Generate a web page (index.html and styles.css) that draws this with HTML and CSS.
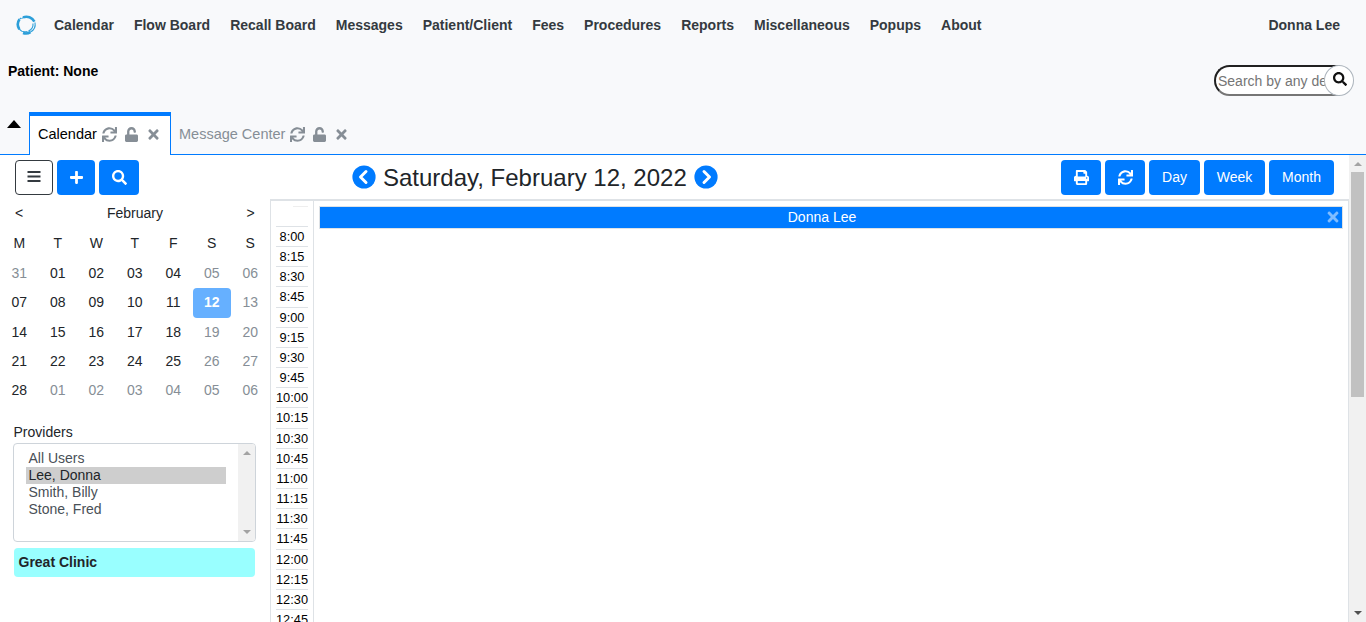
FILE: index.html
```html
<!DOCTYPE html>
<html lang="en">
<head>
<meta charset="utf-8">
<title>Calendar</title>
<link rel="stylesheet" href="styles.css">
</head>
<body>
<svg class="defs" width="0" height="0">
<symbol id="sync" viewBox="0 0 512 512"><path d="M440.65 12.57l4 82.77A247.16 247.16 0 0 0 255.83 8C134.73 8 33.91 94.92 12.29 209.82A12 12 0 0 0 24.09 224h49.05a12 12 0 0 0 11.67-9.26 175.91 175.91 0 0 1 317-56.94l-101.46-4.86a12 12 0 0 0-12.57 12v47.41a12 12 0 0 0 12 12H500a12 12 0 0 0 12-12V12a12 12 0 0 0-12-12h-47.37a12 12 0 0 0-11.98 12.57zM255.83 432a175.61 175.61 0 0 1-146-77.8l101.8 4.87a12 12 0 0 0 12.57-12v-47.4a12 12 0 0 0-12-12H12a12 12 0 0 0-12 12V500a12 12 0 0 0 12 12h47.35a12 12 0 0 0 12-12.6l-4.15-82.57A247.17 247.17 0 0 0 255.83 504c121.11 0 221.93-86.92 243.55-201.82a12 12 0 0 0-11.8-14.18h-49.05a12 12 0 0 0-11.67 9.26A175.86 175.86 0 0 1 255.83 432z"/></symbol>
<symbol id="search" viewBox="0 0 512 512"><path d="M505 442.7L405.3 343c-4.5-4.5-10.6-7-17-7H372c27.6-35.3 44-79.7 44-128C416 93.1 322.9 0 208 0S0 93.1 0 208s93.1 208 208 208c48.3 0 92.7-16.4 128-44v16.3c0 6.4 2.5 12.5 7 17l99.7 99.7c9.4 9.4 24.6 9.4 33.9 0l28.3-28.3c9.4-9.4 9.4-24.6.1-34zM208 336c-70.7 0-128-57.2-128-128 0-70.7 57.2-128 128-128 70.7 0 128 57.2 128 128 0 70.7-57.2 128-128 128z"/></symbol>
<symbol id="times" viewBox="0 0 352 512"><path d="M242.72 256l100.07-100.07c12.28-12.28 12.28-32.19 0-44.48l-22.24-22.24c-12.28-12.28-32.19-12.28-44.48 0L176 189.28 75.93 89.21c-12.28-12.28-32.19-12.28-44.48 0L9.21 111.45c-12.28 12.28-12.28 32.19 0 44.48L109.28 256 9.21 356.07c-12.28 12.28-12.28 32.19 0 44.48l22.24 22.24c12.28 12.28 32.2 12.28 44.48 0L176 322.72l100.07 100.07c12.28 12.28 32.2 12.28 44.48 0l22.24-22.24c12.28-12.28 12.28-32.19 0-44.48L242.72 256z"/></symbol>
<symbol id="plus" viewBox="0 0 448 512"><path d="M416 208H272V64c0-17.67-14.33-32-32-32h-32c-17.67 0-32 14.33-32 32v144H32c-17.67 0-32 14.33-32 32v32c0 17.67 14.33 32 32 32h144v144c0 17.67 14.33 32 32 32h32c17.67 0 32-14.33 32-32V304h144c17.67 0 32-14.33 32-32v-32c0-17.67-14.33-32-32-32z"/></symbol>
<symbol id="unlock" viewBox="0 0 448 512"><path d="M400 256H152V152.9c0-39.6 31.7-72.5 71.3-72.9 40-.4 72.7 32.1 72.7 72v16c0 13.3 10.7 24 24 24h32c13.3 0 24-10.7 24-24v-16C376 68 307.5-.3 223.5 0 139.5.3 72 69.5 72 153.5V256H48c-26.5 0-48 21.5-48 48v160c0 26.5 21.5 48 48 48h352c26.5 0 48-21.5 48-48V304c0-26.5-21.5-48-48-48z"/></symbol>
<symbol id="print" viewBox="0 0 512 512"><path fill-rule="evenodd" d="M448 192V77.25c0-8.49-3.37-16.62-9.37-22.63L393.37 9.37c-6-6-14.14-9.37-22.63-9.37H96C78.33 0 64 14.33 64 32v160c-35.35 0-64 28.65-64 64v112c0 8.84 7.16 16 16 16h48v96c0 17.67 14.33 32 32 32h320c17.67 0 32-14.33 32-32v-96h48c8.84 0 16-7.16 16-16V256c0-35.35-28.65-64-64-64zm-64 256H128v-76h256v76zm0-224H128V64h192v48c0 8.84 7.16 16 16 16h48v96zm48 72a24 24 0 1 1 0-48 24 24 0 0 1 0 48z"/></symbol>
</svg>

<header class="top">
  <nav class="menu">
    <svg class="logo" viewBox="0 0 22 22"><g fill="none" stroke="#2c9fd9"><path stroke-width="2.6" d="M8 3.4A9 9 0 0 1 19.4 7.6M4.5 5.2a9 9 0 0 0-.2 10M8 19a8.6 8.6 0 0 0 7.5-.8"/><path stroke-width="1.1" d="M6.5 4.6A9 9 0 0 1 9 3.2M4.6 5.2 6 4M20 8.500a9 9 0 0 1-4.600 9.600M3.800 14.500a8 8 0 0 0 8.600 3M18 9.500a7.500 7.500 0 0 1-4.500 7.600"/></g></svg>
    <span>Calendar</span><span>Flow Board</span><span>Recall Board</span><span>Messages</span><span>Patient/Client</span><span>Fees</span><span>Procedures</span><span>Reports</span><span>Miscellaneous</span><span>Popups</span><span>About</span>
    <span class="user">Donna Lee</span>
  </nav>
  <div class="patient">
    <span class="patient-name">Patient: None</span>
    <div class="search"><div class="search-field">Search by any demographics</div><div class="search-btn"><svg><use href="#search"/></svg></div></div>
  </div>
  <div class="tabs">
    <div class="toggle"></div>
    <div class="tab active"><span>Calendar</span><svg class="i-sync"><use href="#sync"/></svg><svg class="i-lock"><use href="#unlock"/></svg><svg class="i-x"><use href="#times"/></svg></div>
    <div class="tab"><span>Message Center</span><svg class="i-sync"><use href="#sync"/></svg><svg class="i-lock"><use href="#unlock"/></svg><svg class="i-x"><use href="#times"/></svg></div>
  </div>
</header>

<main class="frame">
  <div class="content">
    <div class="toolbar">
      <div class="left-tools">
        <div class="btn outline"><svg viewBox="0 0 14 14"><path d="M.5 1h13v2H.5zM.5 5.500h13v2H.5zM.5 10h13v2H.5z"/></svg></div>
        <div class="btn w38"><svg class="p"><use href="#plus"/></svg></div>
        <div class="btn w40"><svg><use href="#search"/></svg></div>
      </div>
      <div class="date">
        <svg viewBox="0 0 24 24"><circle cx="12" cy="12" r="11.6"/><path d="M14 6.500 8.500 12l5.500 5.500"/></svg>
        <span>Saturday, February 12, 2022</span>
        <svg viewBox="0 0 24 24"><circle cx="12" cy="12" r="11.6"/><path d="M10 6.500l5.500 5.500-5.500 5.500"/></svg>
      </div>
      <div class="right-tools">
        <div class="btn w40"><svg><use href="#print"/></svg></div>
        <div class="btn w40"><svg><use href="#sync"/></svg></div>
        <div class="btn w51">Day</div><div class="btn w61">Week</div><div class="btn w65">Month</div>
      </div>
    </div>
    <div class="body">
      <aside class="side">
        <div class="month"><span>&lt;</span><span>February</span><span>&gt;</span></div>
        <div class="days head"><span>M</span><span>T</span><span>W</span><span>T</span><span>F</span><span>S</span><span>S</span></div>
        <div class="days">
          <span class="off">31</span><span>01</span><span>02</span><span>03</span><span>04</span><span class="off">05</span><span class="off">06</span>
          <span>07</span><span>08</span><span>09</span><span>10</span><span>11</span><span class="today">12</span><span class="off">13</span>
          <span>14</span><span>15</span><span>16</span><span>17</span><span>18</span><span class="off">19</span><span class="off">20</span>
          <span>21</span><span>22</span><span>23</span><span>24</span><span>25</span><span class="off">26</span><span class="off">27</span>
          <span>28</span><span class="off">01</span><span class="off">02</span><span class="off">03</span><span class="off">04</span><span class="off">05</span><span class="off">06</span>
        </div>
        <div class="label">Providers</div>
        <div class="select">
          <div class="options"><div>All Users</div><div class="sel">Lee, Donna</div><div>Smith, Billy</div><div>Stone, Fred</div></div>
          <div class="mini-bar"><i class="up"></i><i class="down"></i></div>
        </div>
        <div class="clinic">Great Clinic</div>
      </aside>
      <section class="grid">
        <div class="times">
          <div class="notch"></div>
          <div>8:00</div><div>8:15</div><div>8:30</div><div>8:45</div><div>9:00</div><div>9:15</div><div>9:30</div><div>9:45</div><div>10:00</div><div>10:15</div><div>10:30</div><div>10:45</div><div>11:00</div><div>11:15</div><div>11:30</div><div>11:45</div><div>12:00</div><div>12:15</div><div>12:30</div><div>12:45</div>
        </div>
        <div class="schedule"><div class="provider"><span>Donna Lee</span><svg><use href="#times"/></svg></div></div>
      </section>
    </div>
  </div>
  <div class="scroll"><i class="up"></i><div class="thumb"></div><i class="down"></i></div>
</main>
</body>
</html>
```
FILE: styles.css
```css
* { box-sizing: border-box; }
body { margin: 0; height: 622px; overflow: hidden; display: flex; flex-direction: column; background: #fff; color: #212529; font: 14px/20px "Liberation Sans", Arial, sans-serif; }
.defs { display: none; }
svg { fill: currentColor; flex: none; display: block; }
.top { height: 155px; flex: none; background: #f8f9fb; display: flex; flex-direction: column; }
.menu { height: 50px; display: flex; align-items: center; gap: 20px; padding: 0 26px 0 15px; font-weight: bold; color: #343a40; }
.logo { width: 22px; height: 22px; margin-right: -3px; }
.user { margin-left: auto; }
.patient { height: 62px; display: flex; justify-content: space-between; padding: 11px 12px 0 8px; }
.patient-name { font-weight: bold; color: #000; }
.search { display: flex; margin-top: 3px; height: 32px; align-items: center; }
.search-field { width: 126px; height: 31px; border: 2px solid #767676; border-color: #212121 #767676 #767676 #212121; border-right: 0; border-radius: 16px 0 0 16px; background: #fff; color: #757575; line-height: 28px; padding-left: 2px; font-size: 14px; white-space: nowrap; overflow: hidden; }
.search-btn { width: 30px; height: 31px; margin-left: -16px; border: 1px solid #adb5bd; border-radius: 50%; background: #fff; display: grid; place-items: center; color: #111; padding: 0 0 2px 2px; }
.search-btn svg { width: 14px; height: 14px; }
.tabs { height: 43px; display: flex; border-bottom: 1px solid #007bff; }
.toggle { width: 29px; padding: 8px 0 0 7px; }
.toggle::before { content: ""; display: block; width: 0; border: 7px solid transparent; border-top: 0; border-bottom: 8px solid #000; }
.tab { height: 42px; display: flex; align-items: center; padding: 2px 8px 0; color: #868e96; font-size: 14.5px; }
.tab.active { height: 43px; border: 1px solid #007bff; border-top-width: 4px; border-bottom: 0; background: #fff; padding: 0 0 3px 8px; width: 142px; }
.tab.active span { color: #000; }
.tab svg { margin-top: 1px; }
.i-sync { width: 15px; height: 15px; margin-left: 5px; }
.i-lock { width: 13px; height: 15px; margin-left: 8px; }
.i-x { width: 11px; height: 15px; margin-left: 10px; }
.frame { flex: 1; min-height: 0; display: flex; }
.content { flex: 1; min-width: 0; display: flex; flex-direction: column; }
.toolbar { height: 44px; flex: none; display: grid; grid-template-columns: 337px 1fr auto; padding: 5px 15px 0 15px; }
.left-tools, .right-tools { display: flex; gap: 4px; }
.btn { width: 38px; height: 35px; border-radius: 4px; background: #007bff; color: #fff; display: flex; align-items: center; justify-content: center; padding-bottom: 1px; }
.btn svg { width: 15px; height: 15px; }
.btn svg.p { width: 13px; height: 15px; }
.btn.outline { background: #fff; border: 1px solid #343a40; color: #343a40; }
.btn.outline svg { width: 14px; height: 14px; }
.w40 { width: 40px; } .w51 { width: 51px; } .w61 { width: 61px; } .w65 { width: 65px; }
.date { height: 35px; display: flex; align-items: center; gap: 7px; font-size: 24px; padding-bottom: 1px; }
.date svg { width: 24px; height: 24px; }
.date circle { fill: #007bff; }
.date path { fill: none; stroke: #fff; stroke-width: 3; stroke-linecap: round; stroke-linejoin: round; }
.date span { white-space: nowrap; padding-top: 1px; }
.body { flex: 1; min-height: 0; display: flex; }
.side { width: 270px; display: flex; flex-direction: column; }
.month { display: grid; grid-template-columns: 38px 194px 38px; height: 30px; align-items: center; text-align: center; padding-bottom: 2px; }
.month span:last-child { padding-right: 1px; }
.days { display: grid; grid-template-columns: repeat(7, 38.5px); grid-auto-rows: 29.4px; justify-items: center; text-align: center; line-height: 29.4px; color: #212529; }
.head { margin-bottom: .4px; }
.days span { width: 38px; }
.days .off { color: #868e96; }
.days .today { background: #66b0ff; color: #fff; border-radius: 4px; }
.today { font-weight: bold; }
.label { margin: 16.6px 0 0 13.5px; }
.select { margin: 1px 0 0 13px; width: 243px; height: 99px; border: 1px solid #ced4da; border-radius: 4px; display: flex; justify-content: space-between; color: #495057; overflow: hidden; }
.options { padding: 6px 0 0 12px; width: 212px; line-height: 17px; }
.options div { padding-left: 2.500px; }
.options .sel { background: #cecece; color: #212529; }
.mini-bar { width: 17px; background: #f1f1f1; display: flex; flex-direction: column; align-items: center; justify-content: space-between; padding: 7px 0; }
.up { border: 4px solid transparent; border-top: 0; border-bottom-color: #a3a3a3; }
.down { border: 4px solid transparent; border-bottom: 0; border-top-color: #a3a3a3; }
.clinic { margin: 6px 0 0 14px; width: 241px; height: 29px; line-height: 29px; border-radius: 4px; background: #99ffff; font-weight: bold; padding-left: 4.500px; }
.grid { flex: 1; display: flex; border: 1px solid #dee2e6; border-top-width: 2px; border-bottom: 0; min-height: 0; }
.times { width: 43px; border-right: 1px solid #dee2e6; padding: 0 5px; overflow: hidden; font-size: 12.800px; color: #000; text-align: center; }
.times div { height: 20.170px; border-top: 1px solid #dee2e6; line-height: 20px; }
.times .notch { height: 20px; width: 15px; margin: 5px 0 0 17px; border-color: #eee; }
.schedule { flex: 1; padding: 5px 5px 0 5px; }
.provider { height: 23px; background: #007bff; border: 1px solid #dee2e6; color: #fff; display: flex; align-items: center; padding: 0 3px 2px 0; }
.provider span { flex: 1; text-align: center; padding-right: 3px; }
.provider svg { width: 12px; height: 16px; color: #80bdff; }
.scroll { width: 17px; background: #f1f1f1; display: flex; flex-direction: column; align-items: center; padding: 7px 0; }
.thumb { width: 13px; height: 225px; margin-top: 6px; background: #c1c1c1; }
.scroll .down { margin-top: auto; border-top-color: #505050; }
```
